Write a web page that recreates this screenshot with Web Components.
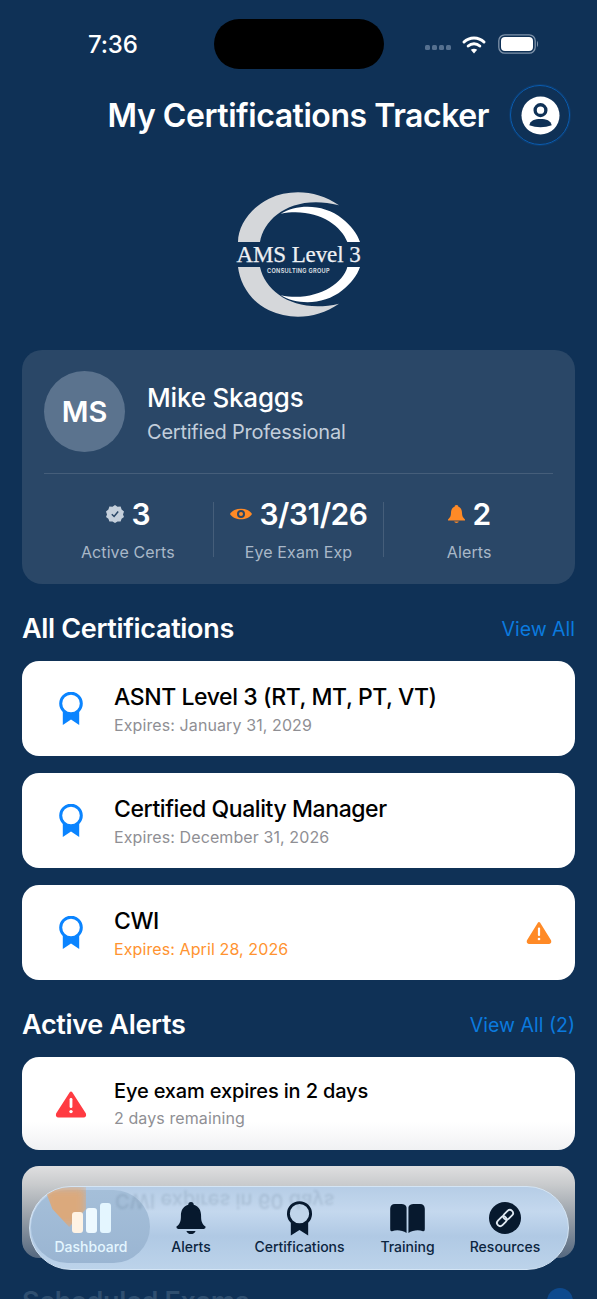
<!DOCTYPE html>
<html>
<head>
<meta charset="utf-8">
<title>My Certifications Tracker</title>
<style>
  html, body { margin: 0; padding: 0; background: #fff; }
  body { width: 600px; height: 1299px; overflow: hidden; font-family: Inter, "Liberation Sans", sans-serif; }
</style>
</head>
<body>
<app-screen>
  <status-bar></status-bar>
  <app-header>My Certifications Tracker</app-header>
  <brand-logo></brand-logo>
  <profile-card></profile-card>
  <section-head link="View All">All Certifications</section-head>
  <info-card heading="ASNT Level 3 (RT, MT, PT, VT)" sub="Expires: January 31, 2029" icon="ribbon"></info-card>
  <info-card heading="Certified Quality Manager" sub="Expires: December 31, 2026" icon="ribbon"></info-card>
  <info-card heading="CWI" sub="Expires: April 28, 2026" icon="ribbon" warn></info-card>
  <section-head link="View All (2)">Active Alerts</section-head>
  <info-card compact heading="Eye exam expires in 2 days" sub="2 days remaining" icon="danger"></info-card>
  <glass-card></glass-card>
  <section-head faded>Scheduled Exams</section-head>
  <tab-bar></tab-bar>
</app-screen>

<script>
// shared icon paths
const ICONS = {
  ribbon: `<svg width="24" height="34" viewBox="0 0 24 34"><path d="M3.800 19 V33 L12 27.500 L20.200 33 V19 Z" fill="#0a84ff"/><circle cx="12" cy="11.500" r="10.300" fill="#fff" stroke="#0a84ff" stroke-width="3"/></svg>`,
  warn: `<svg width="26" height="23" viewBox="0 0 26 23"><path d="M13 2.200 L24 20 Q24.400 21.600 23 21.800 H3 Q1.600 21.600 2 20 Z" fill="#ff8a26" stroke="#ff8a26" stroke-width="2.400" stroke-linejoin="round"/><rect x="11.900" y="6.500" width="2.200" height="8.500" rx="1" fill="#fff"/><circle cx="13" cy="18" r="1.300" fill="#fff"/></svg>`,
  danger: `<svg width="32" height="28" viewBox="0 0 32 28"><path d="M16 3 L29.500 24 Q30 26 28.500 26 H3.500 Q2 26 2.500 24 Z" fill="#ff3b42" stroke="#ff3b42" stroke-width="3" stroke-linejoin="round"/><rect x="14.600" y="8" width="2.800" height="10" rx="1.300" fill="#fff"/><circle cx="16" cy="21.600" r="1.700" fill="#fff"/></svg>`
};

class AppScreen extends HTMLElement {
  constructor() {
    super();
    this.attachShadow({ mode: 'open' });
    this.shadowRoot.innerHTML = `
      <style>
        :host { display: block; position: relative; width: 597px; height: 1299px; overflow: hidden;
          background: #0f3156; color: #fff; font-family: Inter, "Liberation Sans", sans-serif; }
        .content { display: flex; flex-direction: column; padding: 0 22px 0 22px; }
      </style>
      <div class="content"><slot></slot></div>`;
  }
}

class StatusBar extends HTMLElement {
  constructor() {
    super();
    this.attachShadow({ mode: 'open' });
    this.shadowRoot.innerHTML = `
      <style>
        :host { display: flex; align-items: center; height: 50px; margin: 19px -22px 0; position: relative; }
        .time { margin-left: 88px; width: 126px; font-size: 24px; font-weight: 500; letter-spacing: -.2px; }
        .island { width: 170px; height: 50px; border-radius: 25px; background: #000; }
        .right { margin-left: 41px; display: flex; align-items: center; gap: 11px; }
        .dots { display: flex; gap: 2px; margin-right: -1px; margin-top: 6px; }
        .dots i { width: 5px; height: 5px; border-radius: 1.500px; background: #55708f; }
      </style>
      <span class="time">7:36</span>
      <div class="island"></div>
      <div class="right">
        <div class="dots"><i></i><i></i><i></i><i></i></div>
        <svg width="26" height="19" viewBox="0 0 24 19" fill="none" stroke="#fff" stroke-width="3" stroke-linecap="round">
          <path d="M2 7 C7.500 1.500 16.500 1.500 22 7"/>
          <path d="M6.200 11 C9.500 8 14.500 8 17.800 11"/>
          <path d="M12 18.500 L8.800 14.800 C10.800 13.400 13.200 13.400 15.200 14.800 Z" fill="#fff" stroke="none"/>
        </svg>
        <svg width="41" height="20" viewBox="0 0 41 20">
          <rect x=".8" y=".8" width="36.400" height="18.400" rx="6" fill="none" stroke="#7f93aa" stroke-width="1.300"/>
          <rect x="3" y="3" width="32" height="14" rx="4" fill="#fff"/>
          <path d="M39 7 C40.300 7.600 40.300 12.400 39 13 Z" fill="#7f93aa"/>
        </svg>
      </div>`;
  }
}

class AppHeader extends HTMLElement {
  constructor() {
    super();
    this.attachShadow({ mode: 'open' });
    this.shadowRoot.innerHTML = `
      <style>
        :host { display: flex; align-items: center; height: 62px; margin-top: 15px; margin-right: 5px; justify-content: flex-end; gap: 21px; }
        .title { font-size: 32px; font-weight: 600; letter-spacing: -.45px; white-space: nowrap; }
        .btn { width: 60px; height: 60px; box-sizing: border-box; border-radius: 50%; border: 1px solid #0a5cb0; display: flex; align-items: center; justify-content: center; box-shadow: 0 0 0 1px rgba(10,92,176,.25); }
      </style>
      <span class="title"><slot></slot></span>
      <div class="btn">
        <svg width="39" height="39" viewBox="0 0 40 40">
          <circle cx="20" cy="20" r="19.500" fill="#fff"/>
          <circle cx="20" cy="14.500" r="5.500" fill="none" stroke="#0f3156" stroke-width="3.400"/>
          <path d="M8.500 30 C9.500 25 14 23.500 20 23.500 C26 23.500 30.500 25 31.500 30 Q26 32 20 32 Q14 32 8.500 30 Z" fill="#0f3156"/>
        </svg>
      </div>`;
  }
}

class BrandLogo extends HTMLElement {
  constructor() {
    super();
    this.attachShadow({ mode: 'open' });
    this.shadowRoot.innerHTML = `
      <style>
        :host { display: flex; justify-content: center; height: 126px; margin-top: 46px; }
        .wrap { position: relative; width: 122px; height: 125px; }
        svg { position: absolute; left: 0; top: 0; }
        .a { position: absolute; left: -4px; right: -4px; top: 49px; text-align: center; font-family: "Liberation Serif", serif; font-size: 23px; line-height: 28px; color: #eef0f3; white-space: nowrap; letter-spacing: -.1px; -webkit-text-stroke: .25px #eef0f3; }
        .b { position: absolute; left: 0; right: 0; top: 75px; text-align: center; font-size: 5.600px; line-height: 9px; font-weight: 600; color: #e4e8ec; white-space: nowrap; letter-spacing: .3px; }
      </style>
      <div class="wrap">
        <svg width="122" height="125" viewBox="112 65 366 375">
          <path d="M415 105 C350 60 270 55 205 85 C150 112 112 165 112 215 L178 215 C190 140 280 70 415 105 Z" fill="#d5d7da"/>
          <path d="M112 290 L178 290 C195 370 290 430 415 400 C350 445 270 450 205 420 C150 395 118 340 112 290 Z" fill="#d5d7da"/>
          <path d="M240 130 C290 100 370 100 425 145 C450 165 470 190 478 215 L440 215 C420 160 340 110 240 130 Z" fill="#fff"/>
          <path d="M478 290 L440 290 C425 345 340 395 240 375 C290 405 370 405 425 360 C450 340 470 315 478 290 Z" fill="#fff"/>
        </svg>
        <div class="a">AMS Level 3</div>
        <div class="b">CONSULTING GROUP</div>
      </div>`;
  }
}

class StatCell extends HTMLElement {
  constructor() {
    super();
    this.attachShadow({ mode: 'open' });
    this.shadowRoot.innerHTML = `
      <style>
        :host { display: flex; flex: 1; flex-direction: column; align-items: center; gap: 16px; }
        :host(:not(:last-child)) { border-right: 1px solid rgba(255,255,255,.13); }
        .v { display: flex; align-items: center; gap: 8px; height: 24px; font-size: 30px; font-weight: 600; letter-spacing: -.5px; }
        .l { font-size: 16px; color: #a9b8c8; line-height: 20px; letter-spacing: .1px; }
      </style>
      <div class="v"><slot name="icon"></slot>${this.getAttribute('value')}</div>
      <div class="l">${this.getAttribute('label')}</div>`;
  }
}

class ProfileCard extends HTMLElement {
  constructor() {
    super();
    this.attachShadow({ mode: 'open' });
    this.shadowRoot.innerHTML = `
      <style>
        :host { display: block; margin-top: 32px; margin-bottom: 17px; height: 234px; box-sizing: border-box; padding: 21px 22px 0; border-radius: 20px; background: #2a4767; }
        .top { display: flex; align-items: center; gap: 22px; padding-bottom: 21px; border-bottom: 1px solid rgba(255,255,255,.13); }
        .avatar { width: 81px; height: 81px; border-radius: 50%; background: #5b738e; display: flex; align-items: center; justify-content: center; font-size: 29px; font-weight: 600; }
        .who { padding-top: 3px; }
        .name { font-size: 26px; font-weight: 500; letter-spacing: -.2px; line-height: 34px; }
        .role { font-size: 20px; color: #c2cedb; line-height: 26px; margin-top: 4px; letter-spacing: -.23px; }
        .stats { display: flex; align-items: stretch; margin: 28px -1px 0 -1px; height: 55px; }
      </style>
      <div class="top">
        <div class="avatar">MS</div>
        <div class="who">
          <div class="name">Mike Skaggs</div>
          <div class="role">Certified Professional</div>
        </div>
      </div>
      <div class="stats">
        <stat-cell value="3" label="Active Certs">
          <svg slot="icon" width="18" height="18" viewBox="0 0 18 18"><path d="M9 0 L11.500 1.800 L14.600 1.600 L15.600 4.500 L18 6.500 L17 9.500 L18 12 L15.600 13.800 L14.600 16.600 L11.500 16.400 L9 18 L6.500 16.400 L3.400 16.600 L2.400 13.800 L0 12 L1 9.500 L0 6.500 L2.400 4.500 L3.400 1.600 L6.500 1.800 Z" fill="#c5d0dc"/><path d="M5.800 9.200 L8.100 11.500 L12.200 6.500" fill="none" stroke="#2a4767" stroke-width="1.500"/></svg>
        </stat-cell>
        <stat-cell value="3/31/26" label="Eye Exam Exp">
          <svg slot="icon" width="22" height="14" viewBox="0 0 22 14"><path d="M0 7 C4 0 18 0 22 7 C18 14 4 14 0 7 Z" fill="#ff8a26"/><circle cx="11" cy="7" r="4" fill="#2a4767"/><circle cx="11" cy="7" r="2" fill="#ff8a26"/></svg>
        </stat-cell>
        <stat-cell value="2" label="Alerts">
          <svg slot="icon" width="17" height="19" viewBox="0 0 17 19"><path d="M8.500 0 C10 0 10.400 1 10.400 1.800 C13 2.700 14 5 14 8 C14 11 15 12.500 17 14.500 V15.500 H0 V14.500 C2 12.500 3 11 3 8 C3 5 4 2.700 6.600 1.800 C6.600 1 7 0 8.500 0 Z" fill="#ff8a26"/><path d="M6.200 16.600 H10.800 C10.500 18.400 6.500 18.400 6.200 16.600 Z" fill="#ff8a26"/></svg>
        </stat-cell>
      </div>`;
  }
}

class SectionHead extends HTMLElement {
  constructor() {
    super();
    this.attachShadow({ mode: 'open' });
    const link = this.getAttribute('link');
    const faded = this.hasAttribute('faded');
    this.shadowRoot.innerHTML = `
      <style>
        :host { display: flex; align-items: center; justify-content: space-between; height: 36px; margin-top: 9px; margin-bottom: 15px; flex: none; }
        :host([faded]) { margin-top: 25px; color: #2f4f70; }
        .t { font-size: 27px; font-weight: 600; letter-spacing: -.33px; }
        .l { font-size: 19.500px; color: #0b7ade; letter-spacing: 0; padding-top: 1px; }
        .badge { width: 26px; height: 26px; border-radius: 50%; background: #0e4a8e; margin-right: 2px; }
      </style>
      <span class="t"><slot></slot></span>
      ${link ? `<span class="l">${link}</span>` : ''}
      ${faded ? '<span class="badge"></span>' : ''}`;
  }
}

class InfoCard extends HTMLElement {
  constructor() {
    super();
    this.attachShadow({ mode: 'open' });
    const warn = this.hasAttribute('warn');
    this.shadowRoot.innerHTML = `
      <style>
        :host { display: flex; align-items: center; height: 95px; box-sizing: border-box; margin-bottom: 17px; padding: 0 23px 0 0; border-radius: 17px; background: #fff; color: #000; flex: none; }
        :host([compact]) { height: 93px; margin-bottom: 16px; background: linear-gradient(#fff 70%, #f0f1f3); }
        :host([compact]) .h { font-size: 20px; letter-spacing: -.15px; }
        :host([compact]) .s { margin-top: 2px; }
        :host([compact]) .body { padding: 0 0 2px; }
        .ico { width: 92px; display: flex; justify-content: center; flex: none; padding-left: 5px; box-sizing: border-box; }
        .body { flex: 1; min-width: 0; padding-top: 2px; }
        .h { font-size: 23px; font-weight: 500; line-height: 28px; letter-spacing: -.42px; white-space: nowrap; }
        .s { font-size: 16px; line-height: 22px; margin-top: 3px; color: #8f8f94; letter-spacing: .1px; }
        .s.warn { color: #ff9330; }
      </style>
      <div class="ico">${ICONS[this.getAttribute('icon')]}</div>
      <div class="body">
        <div class="h">${this.getAttribute('heading')}</div>
        <div class="s ${warn ? 'warn' : ''}">${this.getAttribute('sub')}</div>
      </div>
      ${warn ? ICONS.warn : ''}`;
  }
}

// the second alert card, seen through the tab bar's blur
class GlassCard extends HTMLElement {
  constructor() {
    super();
    this.attachShadow({ mode: 'open' });
    this.shadowRoot.innerHTML = `
      <style>
        :host { display: block; flex: none; height: 92px; border-radius: 17px; background: linear-gradient(#dfdfe0 0, #c9cbcd 20%, #98a0a9 55%, #55687f 100%); }
      </style>`;
  }
}

class TabBar extends HTMLElement {
  constructor() {
    super();
    this.attachShadow({ mode: 'open' });
    this.shadowRoot.innerHTML = `
      <style>
        :host { position: absolute; left: 29px; top: 1186px; width: 540px; height: 84px; box-sizing: border-box; border-radius: 42px; border: 1.500px solid #d4e5f5;
          display: grid; grid-template-columns: 122px 78px 139px 77px 1fr; padding-right: 4px; overflow: hidden;
          background: linear-gradient(180deg, #b6cde6 0%, #c4d8ee 30%, #b0c9e4 60%, #bcd3ea 100%); color: #0c2540; }
        .tab { display: flex; flex-direction: column; align-items: center; font-size: 14px; line-height: 17px; font-weight: 500; letter-spacing: 0; position: relative; padding-top: 14px; box-sizing: border-box; }
        .ic { height: 34px; display: flex; align-items: center; justify-content: center; margin-bottom: 3px; }
        .ic svg { display: block; }
        .tab.on { color: #e4f6ff; }
        .tab.on::before { content: ""; position: absolute; left: 1px; top: 3px; width: 119px; height: 73px; border-radius: 37px; background: linear-gradient(#a5bfd9, #9ab5d2); }
        .tab.on::after { content: ""; position: absolute; left: 14px; top: 0; width: 42px; height: 40px; background: #e5a66d; opacity: .85; filter: blur(4px); clip-path: polygon(0 0, 100% 0, 100% 55%, 60% 100%, 20% 55%); }
        .tab > * { position: relative; z-index: 1; }
        .ghost { position: absolute; left: 85px; top: 2px; font-size: 20px; line-height: 24px; font-weight: 500; color: rgba(40,60,85,.13); white-space: nowrap; filter: blur(1.200px); transform: scaleY(-1); z-index: 2; }
      </style>
      <div class="ghost">CWI expires in 60 days</div>
      <div class="tab on">
        <div class="ic"><svg width="41" height="30" viewBox="0 0 41 30"><rect x="1" y="9" width="11" height="21" rx="3" fill="#fff3e4"/><rect x="15" y="5" width="11" height="25" rx="3" fill="#eef9ff"/><rect x="29" y="0" width="11" height="30" rx="3" fill="#e4f6ff"/></svg></div>
        <span>Dashboard</span>
      </div>
      <div class="tab">
        <div class="ic"><svg width="30" height="33" viewBox="0 0 32 36"><path d="M16 0 C18 0 19 1.500 19 3 C25 4.500 27 10 27 15 C27 21 28 24 32 27 Q32 29 30 29.500 H2 Q0 29 0 27 C4 24 5 21 5 15 C5 10 7 4.500 13 3 C13 1.500 14 0 16 0 Z" fill="#07192e"/><path d="M11 31.500 H21 C20 36 12 36 11 31.500 Z" fill="#07192e"/></svg></div>
        <span>Alerts</span>
      </div>
      <div class="tab">
        <div class="ic"><svg width="27" height="35" viewBox="0 0 28 36"><path d="M5 22 V35.500 L14 30 L23 35.500 V22 Z" fill="#07192e"/><circle cx="14" cy="13" r="11.500" fill="#c0d5ea" stroke="#07192e" stroke-width="3"/></svg></div>
        <span>Certifications</span>
      </div>
      <div class="tab">
        <div class="ic"><svg width="37" height="29" viewBox="0 0 37 31"><path d="M17.500 4 V31 C13 28 7 27.500 2 29 Q0 29.500 0 27 V5 C0 2 2 0 5 0 H11 C15 0 17.500 1.500 17.500 4 Z" fill="#07192e"/><path d="M19.500 4 V31 C24 28 30 27.500 35 29 Q37 29.500 37 27 V5 C37 2 35 0 32 0 H26 C22 0 19.500 1.500 19.500 4 Z" fill="#07192e"/></svg></div>
        <span>Training</span>
      </div>
      <div class="tab">
        <div class="ic"><svg width="32" height="32" viewBox="0 0 32 32"><circle cx="16" cy="16" r="16" fill="#07192e"/><g fill="none" stroke="#dfe8f2" stroke-width="1.800" transform="rotate(-45 16 16)"><rect x="6" y="12.800" width="11" height="6.400" rx="3.200"/><rect x="15" y="12.800" width="11" height="6.400" rx="3.200"/></g></svg></div>
        <span>Resources</span>
      </div>`;
  }
}

customElements.define('app-screen', AppScreen);
customElements.define('status-bar', StatusBar);
customElements.define('app-header', AppHeader);
customElements.define('brand-logo', BrandLogo);
customElements.define('stat-cell', StatCell);
customElements.define('profile-card', ProfileCard);
customElements.define('section-head', SectionHead);
customElements.define('info-card', InfoCard);
customElements.define('glass-card', GlassCard);
customElements.define('tab-bar', TabBar);
</script>
</body>
</html>
